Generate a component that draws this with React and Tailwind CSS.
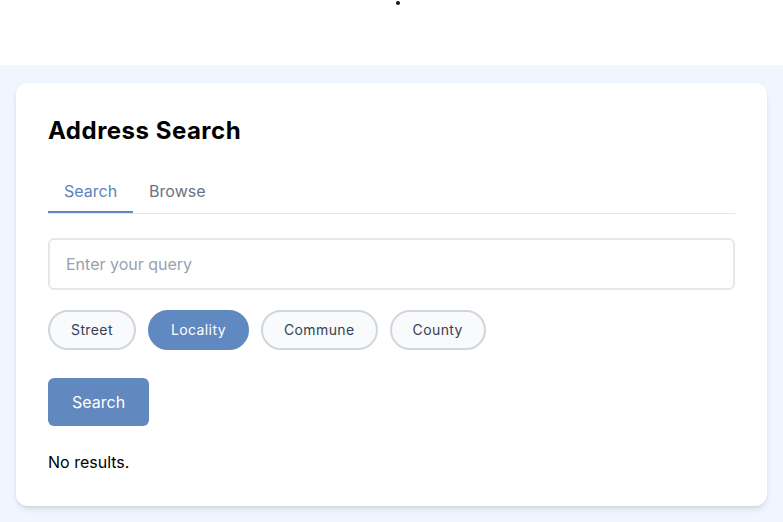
import React from "react";

export default function App() {
  const chips = ["Street", "Locality", "Commune", "County"];
  return (
    <div className="min-h-[522px] bg-white" style={{ fontFamily: "Inter, 'Noto Sans', sans-serif" }}>
      <div className="h-[65px] bg-white flex justify-center">
        <div className="ml-[13px] mt-[1px] w-[4px] h-[4px] rounded-full bg-gray-900" />
      </div>
      <div className="bg-blue-50 px-4 pt-[18px] pb-4 min-h-[457px]">
        <div className="bg-white rounded-xl shadow-md p-8">
          <h1 className="text-2xl font-bold text-black leading-8 tracking-[0.5px]">Address Search</h1>
          <div className="mt-6 flex border-b border-gray-200">
            <button className="px-4 py-2 text-base leading-6 text-[#5b83bd] border-b-2 border-[#5f89c0]">Search</button>
            <button className="px-4 py-2 text-base leading-6 text-gray-500 border-b-2 border-transparent">Browse</button>
          </div>
          <input
            className="mt-6 w-full border-2 border-gray-200 rounded-md px-4 py-3 text-base leading-6 placeholder-gray-400 outline-none"
            placeholder="Enter your query"
          />
          <div className="mt-5 flex gap-3">
            {chips.map((c) =>
              c === "Locality" ? (
                <button key={c} className="px-[21px] py-2 text-sm leading-5 tracking-[0.4px] rounded-full border-2 border-[#5f89c0] bg-[#5f89c0] text-white">{c}</button>
              ) : (
                <button key={c} className="px-[21px] py-2 text-sm leading-5 tracking-[0.4px] rounded-full border-2 border-gray-300 bg-gray-50 text-gray-700">{c}</button>
              )
            )}
          </div>
          <button className="mt-7 block px-6 py-3 text-base leading-6 rounded-md bg-[#6189c0] text-white">Search</button>
          <p className="mt-6 text-base leading-6 text-black">No results.</p>
        </div>
      </div>
    </div>
  );
}
